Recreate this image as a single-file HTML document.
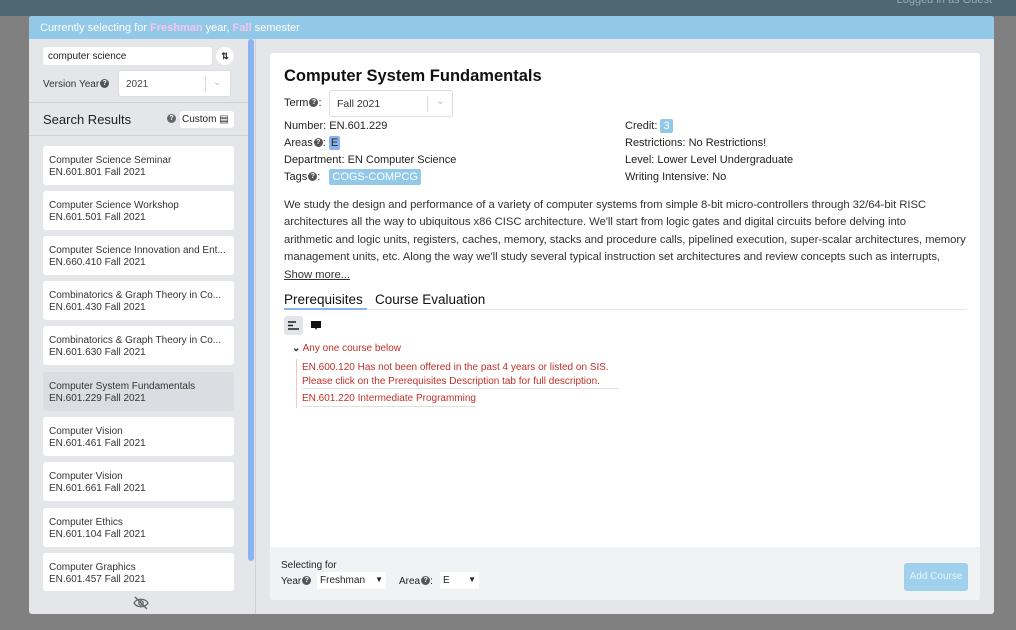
<!DOCTYPE html>
<html><head><style>
*{margin:0;padding:0;box-sizing:border-box}
body{width:1016px;height:630px;background:#808080;font-family:"Liberation Sans",sans-serif;position:relative;overflow:hidden;color:#222}
.a{position:absolute}
.top{left:0;top:0;width:1016px;height:16px;background:#4d6671}
.modal{left:29px;top:16px;width:965px;height:598px;background:#e5e6ea;border-radius:3px}
.hdr{left:29px;top:16px;width:965px;height:23px;background:#93c9e8;color:#fff;font-size:11px;padding:6px 11px;border-radius:3px 3px 0 0}
.hdr b{color:#f4c6ee;font-weight:bold}
.card{background:#fff;border-radius:3px}
.res{left:43px;width:191px;height:39px;font-size:10px;color:#333;padding:9px 6px;line-height:11.5px;white-space:nowrap;overflow:hidden}
.q{display:inline-block;width:9px;height:9px;border-radius:50%;background:#555;color:#fff;font-size:7px;text-align:center;line-height:9px;font-weight:bold;vertical-align:middle;position:relative;top:-1px;margin-left:1px}
.t{font-size:11px;white-space:nowrap;line-height:13px}
.desc{left:284px;top:197px;font-size:11.3px;line-height:17.4px;color:#333;white-space:nowrap;letter-spacing:-0.05px}
.red{color:#c0302a;font-size:10px;white-space:nowrap}
</style></head><body>
<div class="a top"></div>
<div class="a" style="right:24px;top:-6px;color:#9aaab2;font-size:11px">Logged in as Guest</div>
<div class="a modal"></div>
<div class="a hdr">Currently selecting for <b>Freshman</b> year, <b>Fall</b> semester</div>
<!-- left -->
<div class="a card" style="left:43px;top:47px;width:169px;height:18px;font-size:10px;padding:4px 5px">computer science</div>
<div class="a" style="left:216px;top:47px;width:18px;height:18px;border-radius:50%;background:#fff;font-size:9px;text-align:center;line-height:18px;font-weight:bold">⇅</div>
<div class="a t" style="left:43px;top:78px;font-size:10px;color:#333">Version Year<span class="q">?</span></div>
<div class="a card" style="left:118px;top:70px;width:113px;height:27px;border:1px solid #ddd;font-size:10px;padding:8px 7px;color:#444">2021<span style="position:absolute;left:86px;top:5px;height:16px;border-left:1px solid #ddd"></span><span style="position:absolute;left:94px;top:6px;color:#bbb">⌄</span></div>
<div class="a" style="left:29px;top:102px;width:219px;height:1px;background:#d0d0d4"></div>
<div class="a" style="left:43px;top:112px;font-size:13px;color:#222">Search Results</div>
<div class="a" style="left:166px;top:113px;line-height:12px"><span class="q" style="background:#666;top:0">?</span></div>
<div class="a card" style="left:180px;top:111px;width:54px;height:17px;font-size:10px;padding:3px 2px">Custom ▤</div>
<div class="a" style="left:29px;top:135px;width:219px;height:1px;background:#d0d0d4"></div>
<div class="a card res" style="top:146px">Computer Science Seminar<br>EN.601.801 Fall 2021</div>
<div class="a card res" style="top:191px">Computer Science Workshop<br>EN.601.501 Fall 2021</div>
<div class="a card res" style="top:236px">Computer Science Innovation and Ent...<br>EN.660.410 Fall 2021</div>
<div class="a card res" style="top:281px">Combinatorics &amp; Graph Theory in Co...<br>EN.601.430 Fall 2021</div>
<div class="a card res" style="top:326px">Combinatorics &amp; Graph Theory in Co...<br>EN.601.630 Fall 2021</div>
<div class="a res" style="top:372px;background:#dcdde2;border-radius:3px">Computer System Fundamentals<br>EN.601.229 Fall 2021</div>
<div class="a card res" style="top:417px">Computer Vision<br>EN.601.461 Fall 2021</div>
<div class="a card res" style="top:462px">Computer Vision<br>EN.601.661 Fall 2021</div>
<div class="a card res" style="top:508px">Computer Ethics<br>EN.601.104 Fall 2021</div>
<div class="a card res" style="top:553px;height:38px">Computer Graphics<br>EN.601.457 Fall 2021</div>
<svg class="a" style="left:133px;top:596px" width="16" height="14" viewBox="0 0 16 14"><path d="M1 7C4 2 12 2 15 7C12 12 4 12 1 7Z" fill="none" stroke="#666" stroke-width="1.3"/><circle cx="8" cy="7" r="2.2" fill="none" stroke="#666" stroke-width="1.3"/><path d="M2 1L14 13" stroke="#666" stroke-width="1.4"/></svg>
<div class="a" style="left:248px;top:39px;width:6px;height:522px;background:#8ab4f0;border-radius:3px"></div>
<div class="a" style="left:255px;top:39px;width:1px;height:575px;background:#d0d0d4"></div>
<!-- right -->
<div class="a card" style="left:270px;top:53px;width:710px;height:547px;background:#fff"></div>
<div class="a" style="left:270px;top:547px;width:710px;height:53px;background:#f1f2f4;border-radius:0 0 3px 3px"></div>
<div class="a" style="left:284px;top:67px;font-size:16.5px;font-weight:bold;color:#111">Computer System Fundamentals</div>
<div class="a t" style="left:284px;top:97px">Term<span class="q">?</span>:</div>
<div class="a" style="left:329px;top:90px;width:124px;height:27px;border:1px solid #ddd;border-radius:3px;font-size:10.5px;padding:7px 7px;color:#333">Fall 2021<span style="position:absolute;left:97px;top:5px;height:16px;border-left:1px solid #ddd"></span><span style="position:absolute;left:106px;top:4px;color:#bbb">⌄</span></div>
<div class="a t" style="left:284px;top:120px">Number: EN.601.229</div>
<div class="a t" style="left:284px;top:137px">Areas<span class="q">?</span>: <span style="background:#8ab4f0;padding:1px 2px;border-radius:2px">E</span></div>
<div class="a t" style="left:284px;top:154px">Department: EN Computer Science</div>
<div class="a t" style="left:284px;top:171px">Tags<span class="q">?</span>: <span style="background:#93c9e8;color:#fff;padding:2px 3px;border-radius:2px;margin-left:6px">COGS-COMPCG</span></div>
<div class="a t" style="left:625px;top:120px">Credit: <span style="background:#93c9e8;color:#fff;padding:1px 3px;border-radius:2px">3</span></div>
<div class="a t" style="left:625px;top:137px">Restrictions: No Restrictions!</div>
<div class="a t" style="left:625px;top:154px">Level: Lower Level Undergraduate</div>
<div class="a t" style="left:625px;top:171px">Writing Intensive: No</div>
<div class="a desc">We study the design and performance of a variety of computer systems from simple 8-bit micro-controllers through 32/64-bit RISC<br>architectures all the way to ubiquitous x86 CISC architecture. We'll start from logic gates and digital circuits before delving into<br>arithmetic and logic units, registers, caches, memory, stacks and procedure calls, pipelined execution, super-scalar architectures, memory<br>management units, etc. Along the way we'll study several typical instruction set architectures and review concepts such as interrupts,<br><u>Show more...</u></div>
<div class="a" style="left:284px;top:292px;font-size:13.5px;color:#111">Prerequisites</div>
<div class="a" style="left:375px;top:292px;font-size:13.5px;color:#111">Course Evaluation</div>
<div class="a" style="left:284px;top:309px;width:682px;height:1px;background:#e3e6ea"></div>
<div class="a" style="left:284px;top:308px;width:83px;height:2px;background:#8ab4f0"></div>
<div class="a" style="left:284px;top:316px;width:19px;height:19px;background:#e3e5e9;border-radius:3px"></div>
<svg class="a" style="left:287px;top:320px" width="13" height="11"><path d="M1 2H9M1 5.5H6M1 9H12" stroke="#222" stroke-width="1.4"/></svg>
<svg class="a" style="left:310px;top:320px" width="12" height="11"><path d="M1 1H11V8H7L6 10L5 8H1Z" fill="#111"/></svg>
<div class="a red" style="left:292px;top:343px"><b style="color:#222">⌄</b> Any one course below</div>
<div class="a" style="left:296px;top:359px;width:1px;height:49px;background:#f2c6c4"></div>
<div class="a red" style="left:302px;top:361px;line-height:14px">EN.600.120 Has not been offered in the past 4 years or listed on SIS.<br>Please click on the Prerequisites Description tab for full description.</div>
<div class="a" style="left:302px;top:388px;width:317px;height:1px;background:#e0e0e0"></div>
<div class="a red" style="left:302px;top:393px">EN.601.220 Intermediate Programming</div>
<div class="a" style="left:302px;top:406px;width:174px;height:1px;background:#e0e0e0"></div>
<div class="a" style="left:281px;top:560px;font-size:10px;color:#222">Selecting for</div>
<div class="a" style="left:281px;top:576px;font-size:10px;color:#222">Year<span class="q">?</span></div>
<div class="a" style="left:317px;top:572px;width:69px;height:17px;background:#fff;border-radius:2px;font-size:10px;padding:3px 3px">Freshman <span style="float:right;font-size:8px">▼</span></div>
<div class="a" style="left:399px;top:576px;font-size:10px;color:#222">Area<span class="q">?</span>:</div>
<div class="a" style="left:440px;top:572px;width:39px;height:17px;background:#fff;border-radius:2px;font-size:10px;padding:3px 3px">E <span style="float:right;font-size:8px">▼</span></div>
<div class="a" style="left:904px;top:563px;width:64px;height:28px;background:#9fd0ec;border-radius:3px;color:#e9f5fb;font-size:10px;text-align:center;line-height:28px">Add Course</div>
</body></html>
